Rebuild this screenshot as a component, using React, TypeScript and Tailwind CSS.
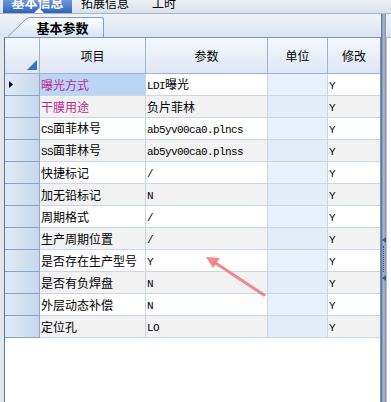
import React from 'react';

interface ParamRow {
  item: string;
  param: string;
  unit: string;
  mod: string;
  pink?: boolean;
}

const rows: ParamRow[] = [
  { item: '曝光方式', param: 'LDI曝光', unit: '', mod: 'Y', pink: true },
  { item: '干膜用途', param: '负片菲林', unit: '', mod: 'Y', pink: true },
  { item: 'CS面菲林号', param: 'ab5yv00ca0.plncs', unit: '', mod: 'Y' },
  { item: 'SS面菲林号', param: 'ab5yv00ca0.plnss', unit: '', mod: 'Y' },
  { item: '快捷标记', param: '/', unit: '', mod: 'Y' },
  { item: '加无铅标记', param: 'N', unit: '', mod: 'Y' },
  { item: '周期格式', param: '/', unit: '', mod: 'Y' },
  { item: '生产周期位置', param: '/', unit: '', mod: 'Y' },
  { item: '是否存在生产型号', param: 'Y', unit: '', mod: 'Y' },
  { item: '是否有负焊盘', param: 'N', unit: '', mod: 'Y' },
  { item: '外层动态补偿', param: 'N', unit: '', mod: 'Y' },
  { item: '定位孔', param: 'LO', unit: '', mod: 'Y' },
];

// ascii parts in a narrow mono face (like SimSun half-width), cjk in Noto
function Mixed({ text }: { text: string }) {
  const parts = text.split(/([\x00-\x7f]+)/).filter((p) => p.length > 0);
  return (
    <span className="whitespace-nowrap">
      {parts.map((p, i) =>
        /^[\x00-\x7f]+$/.test(p) ? (
          <span key={i} className="font-['Liberation_Mono',monospace] text-[11px] tracking-[-0.6px]">
            {p}
          </span>
        ) : (
          <span key={i} className="font-['Noto_Sans_CJK_SC',sans-serif] text-[12px]">
            {p}
          </span>
        )
      )}
    </span>
  );
}

export default function App() {
  return (
    <div className="w-[391px] h-[402px] overflow-hidden bg-white relative flex flex-col font-['Noto_Sans_CJK_SC',sans-serif] text-[12px] text-black">
      {/* top tab strip (scrolled, cut off) */}
      <div className="h-[14px] shrink-0 flex items-start border-b border-[#a7b4c6] bg-gradient-to-b from-[#eef2f7] to-[#d9e0ea] overflow-hidden">
        <div className="relative ml-[3px] w-[69px] h-[13px] bg-gradient-to-b from-[#6e98dc] to-[#3063b9] text-white font-bold text-[13px] flex justify-center items-start">
          <span className="-mt-[7px] leading-[18px]">基本信息</span>
          <div className="absolute bottom-0 left-[31px] w-0 h-0 border-x-[5px] border-x-transparent border-b-[5px] border-b-white" />
        </div>
        <div className="ml-[9px] -mt-[6px] leading-[18px] text-[12px]">拓展信息</div>
        <div className="ml-[23px] -mt-[6px] leading-[18px] text-[12px]">工时</div>
      </div>

      <div className="flex flex-1 min-h-0">
        {/* left: sub tabs + grid */}
        <div className="w-[381px] flex flex-col">
          <div className="h-[23px] shrink-0 flex items-end pl-[8px] bg-gradient-to-b from-[#f0f4fa] to-[#dae3f0]">
            <svg width="22" height="20" viewBox="0 0 22 20" className="block">
              <defs>
                <linearGradient id="tabg" x1="0" y1="0" x2="0" y2="1">
                  <stop offset="0" stopColor="#ffffff" />
                  <stop offset="1" stopColor="#d6e3f6" />
                </linearGradient>
              </defs>
              <path d="M0 20 L17 3 Q20 0.5 22 0.5 L22 20 Z" fill="url(#tabg)" />
              <path d="M0 19.5 L17 3 Q20 0.5 22 0.5" fill="none" stroke="#7f9cc6" strokeWidth="1" />
            </svg>
            <div className="w-[74px] h-[20px] border-t border-r border-[#7f9cc6] rounded-tr-[3px] bg-gradient-to-b from-white to-[#d6e3f6] flex items-center justify-center font-bold text-[13px] pr-[8px]">
              基本参数
            </div>
          </div>

          <div className="flex flex-1 min-h-0">
            <div className="w-[4px] bg-[#e2e7ee]" />
            <div className="flex-1 border-l border-l-[#5d7396] border-t border-t-[#7796c4] border-r border-r-[#6e8cbc] bg-white">
              <div className="grid grid-cols-[35px_106px_122px_60px_52px]">
                {/* header */}
                <div className="relative h-[36px] border-r border-b border-[#9fb3cf] bg-gradient-to-b from-[#f6f9fd] to-[#dde6f3]">
                  <svg width="10" height="10" viewBox="0 0 10 10" className="absolute right-[2px] bottom-[3px]">
                    <polygon points="10,0 10,10 0,10" fill="#3d6fc5" />
                  </svg>
                </div>
                {['项目', '参数', '单位', '修改'].map((h, i) => (
                  <div
                    key={h}
                    className={
                      i < 3
                        ? 'h-[36px] border-r border-b border-[#9fb3cf] bg-gradient-to-b from-[#f6f9fd] to-[#dde6f3] flex items-center justify-center'
                        : 'h-[36px] border-b border-[#9fb3cf] bg-gradient-to-b from-[#f6f9fd] to-[#dde6f3] flex items-center justify-center'
                    }
                  >
                    {h}
                  </div>
                ))}

                {rows.map((r, idx) => {
                  const alt = idx % 2 === 1;
                  return (
                    <React.Fragment key={r.item}>
                      <div className="relative h-[22px] border-r border-r-[#8ea5c8] border-b border-b-[#8aa2c6] bg-gradient-to-r from-[#e2eaf6] to-[#c7d7ec]">
                        {idx === 0 && (
                          <svg width="4" height="7" viewBox="0 0 4 7" className="absolute left-[4px] top-[7px]">
                            <polygon points="0,0 4,3.5 0,7" fill="#000" />
                          </svg>
                        )}
                      </div>
                      <div
                        className={
                          idx === 0
                            ? 'h-[22px] border-r border-b border-[#c8d6ea] bg-[#b9d4f4] flex items-center pl-[1px] text-[#c2288e]'
                            : r.pink
                            ? 'h-[22px] border-r border-b border-[#c8d6ea] bg-[#f2f2f2] flex items-center pl-[1px] text-[#c2288e]'
                            : alt
                            ? 'h-[22px] border-r border-b border-[#c8d6ea] bg-[#f2f2f2] flex items-center pl-[1px]'
                            : 'h-[22px] border-r border-b border-[#c8d6ea] bg-white flex items-center pl-[1px]'
                        }
                      >
                        <Mixed text={r.item} />
                      </div>
                      <div
                        className={
                          alt
                            ? 'h-[22px] border-r border-b border-[#c8d6ea] bg-[#f2f2f2] flex items-center pl-[1px]'
                            : 'h-[22px] border-r border-b border-[#c8d6ea] bg-white flex items-center pl-[1px]'
                        }
                      >
                        <Mixed text={r.param} />
                      </div>
                      <div
                        className={
                          alt
                            ? 'h-[22px] border-r border-b border-[#c8d6ea] bg-[#e4ecf7] flex items-center'
                            : 'h-[22px] border-r border-b border-[#c8d6ea] bg-[#e8f0fb] flex items-center'
                        }
                      >
                        {r.unit}
                      </div>
                      <div
                        className={
                          alt
                            ? 'h-[22px] border-b border-[#c8d6ea] bg-[#f2f2f2] flex items-center pl-[1px]'
                            : 'h-[22px] border-b border-[#c8d6ea] bg-white flex items-center pl-[1px]'
                        }
                      >
                        <Mixed text={r.mod} />
                      </div>
                    </React.Fragment>
                  );
                })}
              </div>
            </div>
          </div>
        </div>

        {/* splitter */}
        <div className="relative w-[5px] bg-gradient-to-r from-[#5b6f90] via-[#a9b6ca] to-[#8696ae]">
          <svg width="4" height="6" viewBox="0 0 4 6" className="absolute left-[1px] top-[223px]">
            <polygon points="4,0 4,6 0,3" fill="#3e5a88" />
          </svg>
          <div className="absolute left-[2px] top-[232px] h-[26px] border-l border-dotted border-[#2f4f86]" />
          <svg width="4" height="6" viewBox="0 0 4 6" className="absolute left-[1px] top-[261px]">
            <polygon points="4,0 4,6 0,3" fill="#3e5a88" />
          </svg>
        </div>

        {/* right panel edge */}
        <div className="w-[5px] flex flex-col">
          <div className="h-[23px] bg-gradient-to-b from-[#eef2f7] to-[#dfe5ee]" />
          <div className="flex-1 border-t border-l border-[#b3bfd1] bg-white" />
        </div>
      </div>

      {/* annotation arrow */}
      <svg width="391" height="402" viewBox="0 0 391 402" className="absolute left-0 top-0 pointer-events-none">
        <line x1="264" y1="295" x2="214" y2="262" stroke="#f07c7c" strokeWidth="3" strokeLinecap="round" opacity="0.9" />
        <polygon points="206,257 220,258 213,268" fill="#f07c7c" opacity="0.9" />
      </svg>
    </div>
  );
}
